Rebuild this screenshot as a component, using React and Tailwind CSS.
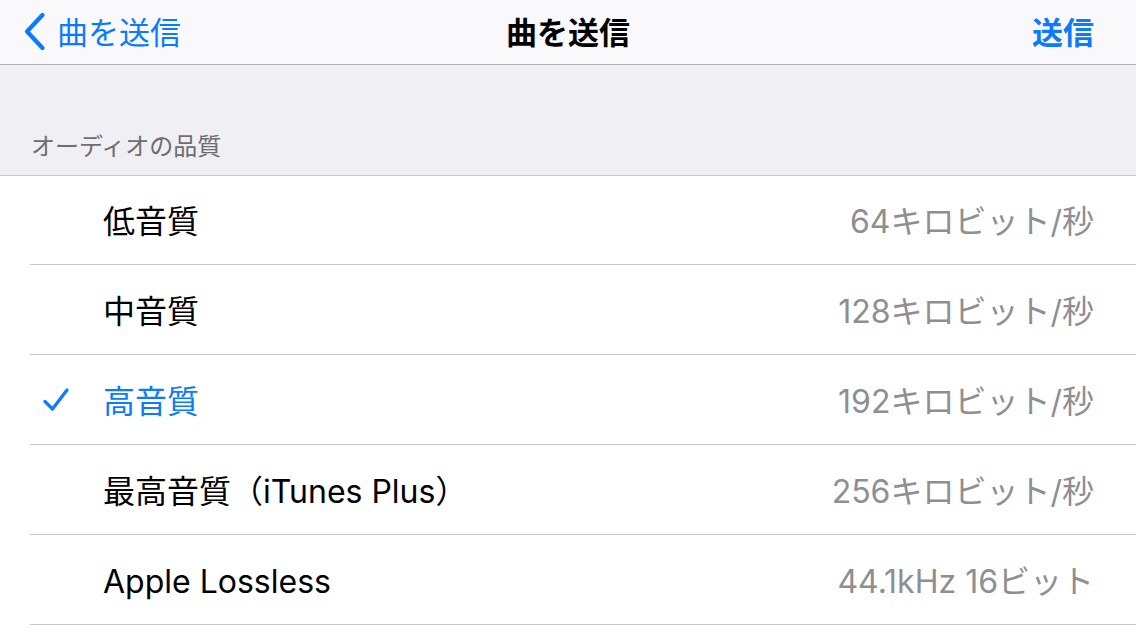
const rows = [
  { label: '低音質', value: '64キロビット/秒' },
  { label: '中音質', value: '128キロビット/秒' },
  { label: '高音質', value: '192キロビット/秒', checked: true },
  { label: '最高音質（iTunes Plus）', value: '256キロビット/秒' },
  { label: 'Apple Lossless', value: '44.1kHz 16ビット' },
];

function Check() {
  return (
    <svg width="26" height="26" viewBox="0 0 26 26" fill="none">
      <path d="M2 14.5 L9.5 22 L24 3" stroke="#0a7aff" strokeWidth="3.2" strokeLinecap="round" strokeLinejoin="round" />
    </svg>
  );
}

function BackChevron() {
  return (
    <svg width="24" height="40" viewBox="0 0 24 40" fill="none">
      <path d="M19.5 3 L4 19.5 L19.5 36" stroke="#0a7aff" strokeWidth="4.2" strokeLinecap="round" strokeLinejoin="round" />
    </svg>
  );
}

export default function App() {
  return (
    <div className="w-[1136px] h-[640px] overflow-hidden bg-white font-['Inter','Noto_Sans_CJK_JP',sans-serif]">
      <div className="h-[65px] bg-[#f9f9fb] border-b border-[#b2b2b2] flex items-center relative">
        <div className="flex items-center pl-[23px] text-[#0a7aff]">
          <BackChevron />
          <span className="text-[31px] leading-none ml-[10px]">曲を送信</span>
        </div>
        <div className="absolute left-1/2 -translate-x-1/2 text-[31px] font-semibold leading-none text-black">曲を送信</div>
        <div className="ml-auto pr-[42px] text-[31px] font-semibold leading-none text-[#0a7aff]">送信</div>
      </div>

      <div className="h-[111px] bg-[#efeff4] border-b border-[#c8c7cc] flex items-end pl-[31px] pb-[16px]">
        <span className="text-[24px] leading-none text-[#6d6d72]">オーディオの品質</span>
      </div>

      <div className="pl-[30px]">
        {rows.map((r, i) => (
          <div key={r.label} className={`${i === 0 ? 'h-[89px]' : 'h-[90px]'} border-b border-[#c8c7cc] flex items-center pr-[42px]`}>
            <div className="w-[73px] flex items-center pl-[13px]">{r.checked && <Check />}</div>
            <span className={`pt-[4px] text-[32px] leading-none ${r.checked ? 'text-[#0a7aff]' : 'text-black'}`}>{r.label}</span>
            <span className="pt-[4px] ml-auto text-[32px] leading-none text-[#8e8e93]">{r.value}</span>
          </div>
        ))}
      </div>
    </div>
  );
}
